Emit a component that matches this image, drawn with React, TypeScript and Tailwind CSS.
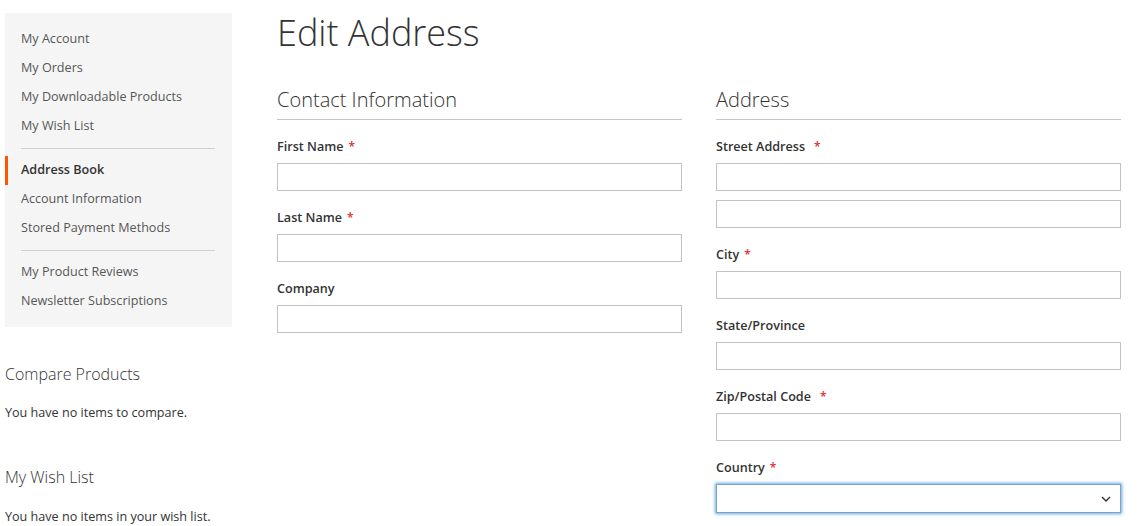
import React from 'react';

const navTop = ['My Account', 'My Orders', 'My Downloadable Products', 'My Wish List'];
const navMid = ['Account Information', 'Stored Payment Methods'];
const navBottom = ['My Product Reviews', 'Newsletter Subscriptions'];

function NavItem({ label }: { label: string }) {
  return (
    <li className="h-[29px] flex items-center pl-4 text-[12.6px] text-[#575757]">{label}</li>
  );
}

function Divider() {
  return <li className="h-px bg-[#d1d1d1] ml-4 mr-[17px] my-[7px]" />;
}

function Field({ label, wide, children }: { label: string; wide?: boolean; children?: React.ReactNode }) {
  return (
    <div className="mb-[17px]">
      <label className="flex items-center h-5 text-[12.6px] font-semibold text-[#333]">
        {label}
        <span className={`text-[#e02b27] text-[12px] ${wide ? 'ml-[9px]' : 'ml-[5px]'}`}>*</span>
      </label>
      <div className="mt-[6px] flex flex-col gap-[9px]">{children ?? <Input />}</div>
    </div>
  );
}

function PlainField({ label }: { label: string }) {
  return (
    <div className="mb-[17px]">
      <label className="flex items-center h-5 text-[12.6px] font-semibold text-[#333]">{label}</label>
      <div className="mt-[6px]">
        <Input />
      </div>
    </div>
  );
}

function Input() {
  return <div className="h-[28px] w-full border border-[#c2c2c2] bg-white" />;
}

function Legend({ title }: { title: string }) {
  return (
    <div className="border-b border-[#c6c6c6] pt-[2px] pb-[5px] mb-[17px]">
      <h2 className="text-[20px] leading-[28px] font-light text-[#333]">{title}</h2>
    </div>
  );
}

export default function App() {
  return (
    <div
      className="w-[1143px] h-[526px] overflow-hidden bg-white flex pl-[5px]"
      style={{ fontFamily: '"Open Sans", "Noto Sans", sans-serif' }}
    >
      {/* Sidebar */}
      <aside className="w-[227px] shrink-0 pt-[13px]">
        <ul className="bg-[#f5f5f5] pt-[12px] pb-[11px]">
          {navTop.map((n) => (
            <NavItem key={n} label={n} />
          ))}
          <Divider />
          <li className="h-[29px] flex items-center pl-[13px] border-l-[3px] border-[#ff5501] text-[12.6px] font-semibold text-[#333]">
            Address Book
          </li>
          {navMid.map((n) => (
            <NavItem key={n} label={n} />
          ))}
          <Divider />
          {navBottom.map((n) => (
            <NavItem key={n} label={n} />
          ))}
        </ul>

        <div className="mt-[35px]">
          <h3 className="text-[16px] leading-6 font-light text-[#333]">Compare Products</h3>
          <p className="mt-[17px] text-[12.6px] leading-5 text-[#333]">You have no items to compare.</p>
        </div>
        <div className="mt-[42px]">
          <h3 className="text-[16px] leading-6 font-light text-[#333]">My Wish List</h3>
          <p className="mt-[18px] text-[12.6px] leading-5 text-[#333]">You have no items in your wish list.</p>
        </div>
      </aside>

      {/* Main */}
      <main className="ml-[45px] w-[844px] pt-[11px]">
        <h1 className="text-[36px] leading-[44px] font-light text-[#333]">Edit Address</h1>

        <div className="mt-[29px] grid grid-cols-2 gap-[34px]">
          <section>
            <Legend title="Contact Information" />
            <Field label="First Name" />
            <Field label="Last Name" />
            <PlainField label="Company" />
          </section>

          <section>
            <Legend title="Address" />
            <Field label="Street Address" wide>
              <Input />
              <Input />
            </Field>
            <Field label="City" />
            <PlainField label="State/Province" />
            <Field label="Zip/Postal Code" wide />
            <Field label="Country">
              <div className="relative h-[29px] w-full border border-[#7ea3c4] bg-white shadow-[0_0_3px_1px_#68a8e0]">
                <svg
                  className="absolute right-[9px] top-[11px]"
                  width="10"
                  height="6"
                  viewBox="0 0 10 6"
                  fill="none"
                  stroke="#333"
                  strokeWidth="1.4"
                >
                  <polyline points="1,1 5,5 9,1" />
                </svg>
              </div>
            </Field>
          </section>
        </div>
      </main>
    </div>
  );
}
